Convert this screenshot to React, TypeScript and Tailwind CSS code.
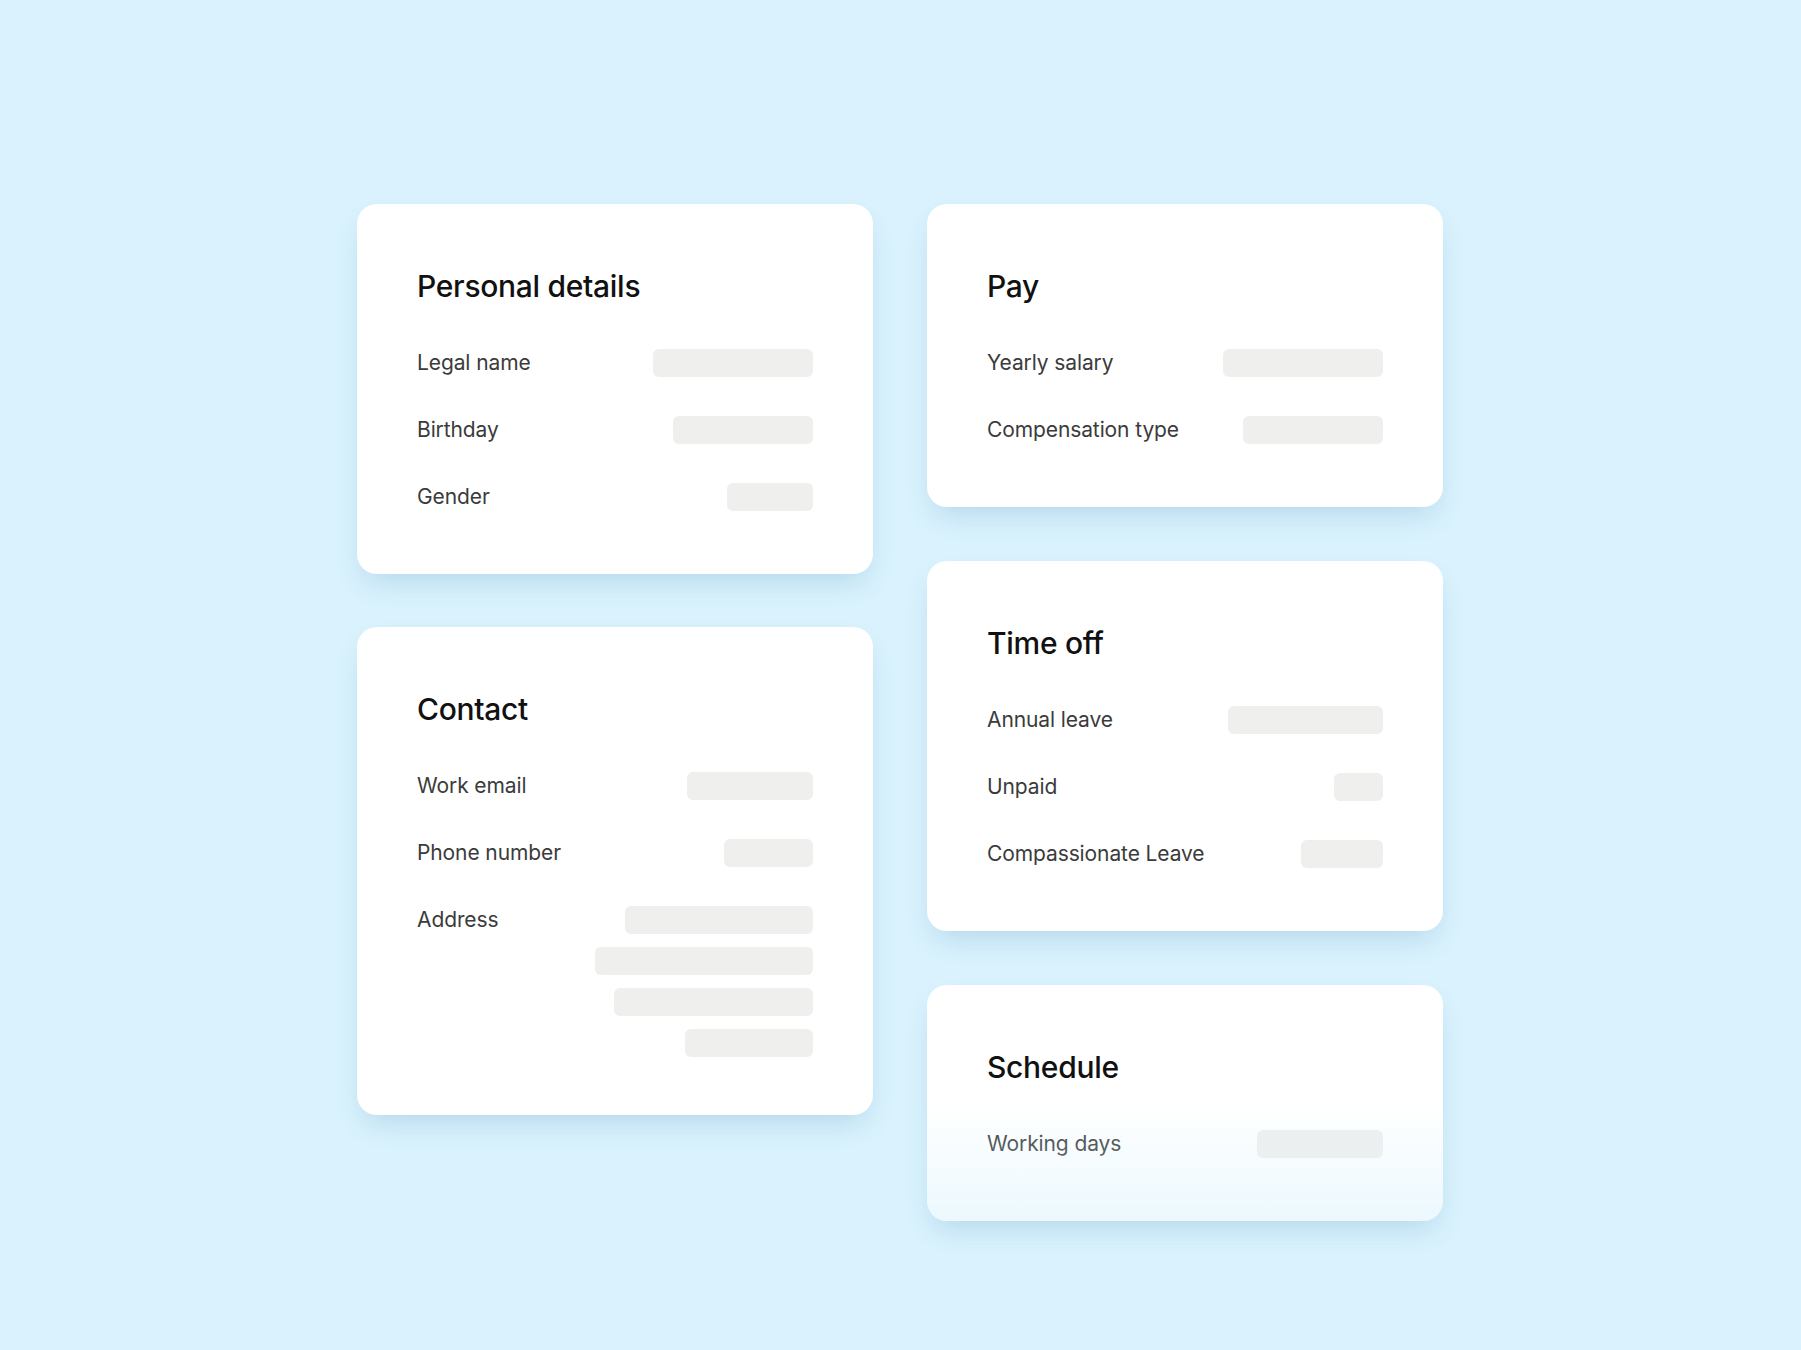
import React from "react";

type Field = {
  label: string;
  bars: number[];
};

type Section = {
  title: string;
  fields: Field[];
  fade?: boolean;
  pad?: string;
};

const leftColumn: Section[] = [
  {
    title: "Personal details",
    fields: [
      { label: "Legal name", bars: [160] },
      { label: "Birthday", bars: [140] },
      { label: "Gender", bars: [86] },
    ],
  },
  {
    title: "Contact",
    fields: [
      { label: "Work email", bars: [126] },
      { label: "Phone number", bars: [89] },
      { label: "Address", bars: [188, 218, 199, 128] },
    ],
    pad: "pb-[58px]",
  },
];

const rightColumn: Section[] = [
  {
    title: "Pay",
    fields: [
      { label: "Yearly salary", bars: [160] },
      { label: "Compensation type", bars: [140] },
    ],
  },
  {
    title: "Time off",
    fields: [
      { label: "Annual leave", bars: [155] },
      { label: "Unpaid", bars: [49] },
      { label: "Compassionate Leave", bars: [82] },
    ],
  },
  {
    title: "Schedule",
    fields: [{ label: "Working days", bars: [126] }],
    fade: true,
  },
];

function Placeholder({ width }: { width: number }) {
  return <div className="h-[28px] rounded-[6px] bg-[#efefed]" style={{ width }} />;
}

function FieldRow({ field }: { field: Field }) {
  return (
    <div className="flex items-start justify-between">
      <span className="text-[21px] leading-[28px] text-[#3b3b3b] tracking-[-0.005em]">
        {field.label}
      </span>
      <div className="flex flex-col items-end gap-[13px]">
        {field.bars.map((w, i) => (
          <Placeholder key={i} width={w} />
        ))}
      </div>
    </div>
  );
}

function Card({ section }: { section: Section }) {
  return (
    <div
      className={`relative overflow-hidden rounded-[20px] bg-white px-[60px] pt-[64px] shadow-[0_14px_28px_-8px_rgba(60,130,170,0.24)] ${
        section.pad ?? "pb-[63px]"
      }`}
    >
      <h2 className="text-[30px] leading-[36px] font-medium text-[#111111] tracking-[-0.01em]">
        {section.title}
      </h2>
      <div className="mt-[45px] flex flex-col gap-[39px]">
        {section.fields.map((f) => (
          <FieldRow key={f.label} field={f} />
        ))}
      </div>
      {section.fade && (
        <div className="pointer-events-none absolute inset-0 bg-gradient-to-b from-transparent from-50% to-[rgba(217,242,253,0.5)]" />
      )}
    </div>
  );
}

export default function App() {
  return (
    <div
      className="flex h-[1350px] justify-center gap-[54px] overflow-hidden bg-[#d9f2fd] pt-[204px] pr-[1px]"
      style={{ fontFamily: "Inter, 'Liberation Sans', sans-serif" }}
    >
      <div className="flex w-[516px] flex-col gap-[53px]">
        {leftColumn.map((s) => (
          <Card key={s.title} section={s} />
        ))}
      </div>
      <div className="flex w-[516px] flex-col gap-[54px]">
        {rightColumn.map((s) => (
          <Card key={s.title} section={s} />
        ))}
      </div>
    </div>
  );
}
